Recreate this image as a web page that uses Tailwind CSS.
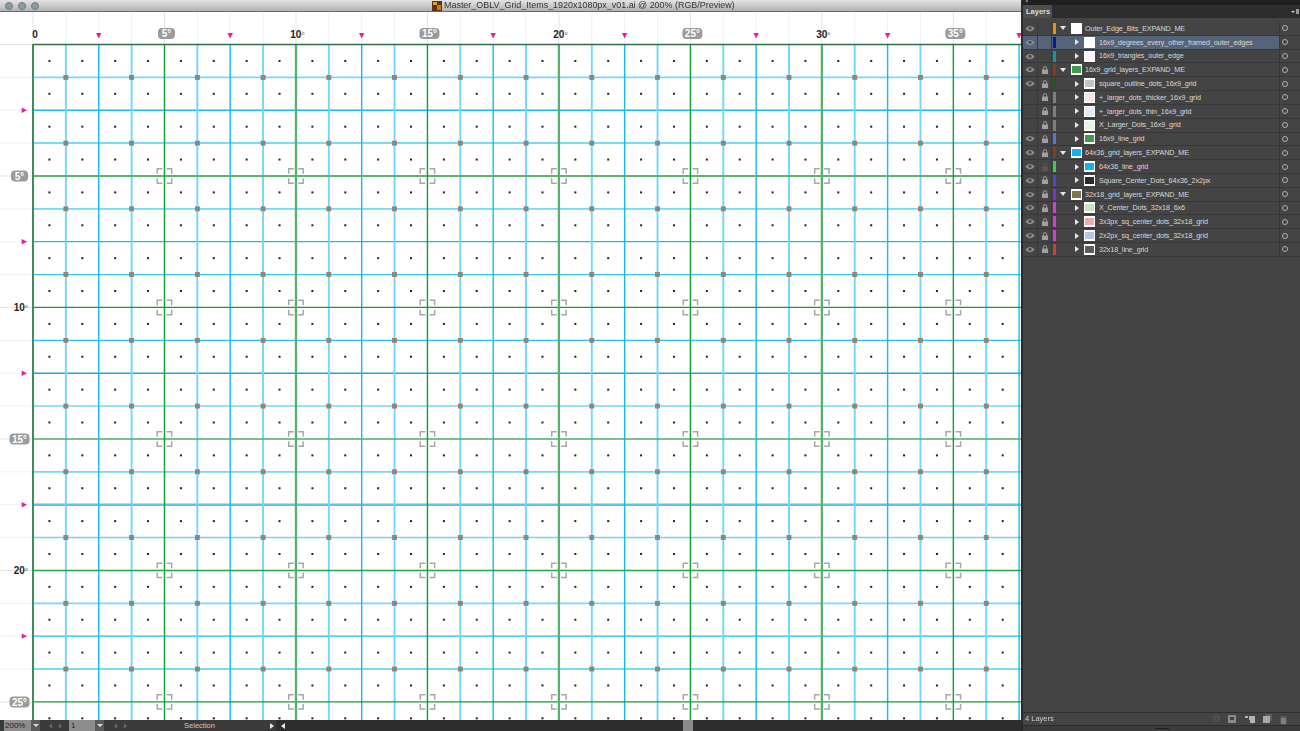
<!DOCTYPE html>
<html lang="en">
<head>
    <meta charset="UTF-8">
    <title>Master_OBLV_Grid_Items_1920x1080px_v01.ai</title>
    <script src="https://cdn.jsdelivr.net/npm/@tailwindcss/browser@4"></script>
</head>
<body class="w-[1300px] h-[731px] overflow-hidden bg-[#444444] font-['Liberation_Sans',sans-serif]">
    <div class="flex w-full h-full blur-[0.3px]">
        <!-- Document window -->
        <div class="w-[1021px] h-full flex flex-col">
            <!-- Title bar -->
            <div class="h-3 shrink-0 flex items-center relative bg-gradient-to-b from-[#e4e4e4] to-[#b2b2b2] border-b border-[#6a6a6a] overflow-hidden">
                <div class="flex gap-[5px] pl-[5px]">
                    <span class="w-2 h-2 rounded-full bg-[#8b9ba3] border border-[#6d7b82]"></span>
                    <span class="w-2 h-2 rounded-full bg-[#8b9ba3] border border-[#6d7b82]"></span>
                    <span class="w-2 h-2 rounded-full bg-[#8b9ba3] border border-[#6d7b82]"></span>
                </div>
                <div class="absolute left-[432px] top-0 h-[11px] flex items-center gap-[2px]">
                    <svg width="10" height="10" viewBox="0 0 10 10"><rect width="10" height="10" fill="#5a3410"/><rect x="1" y="1" width="4" height="3" fill="#e8a020"/><rect x="5" y="4" width="4" height="5" fill="#d07a18"/></svg>
                    <span class="text-[8.95px] leading-none text-[#333333] whitespace-nowrap">Master_OBLV_Grid_Items_1920x1080px_v01.ai @ 200% (RGB/Preview)</span>
                </div>
            </div>
            <!-- Artboard: the grid is a free canvas, drawn by the script below -->
            <div class="flex-1 bg-white overflow-hidden">
                <svg id="grid" width="1021" height="708" viewBox="0 12 1021 708" class="block"></svg>
            </div>
            <!-- Status bar -->
            <div class="h-[11px] shrink-0 flex items-center bg-[#3a3a3a] text-[8px] leading-none">
                <div class="w-[27px] h-full ml-[4px] bg-[#8d8d8d] text-[#1c1c1c] flex items-center pl-[1px]">200%</div>
                <div class="w-[9px] h-full bg-[#5a5a5a] flex items-center justify-center"><span class="border-x-[3px] border-x-transparent border-t-[3px] border-t-[#dddddd]"></span></div>
                <div class="w-[29px] flex items-center justify-center gap-[6px]">
                    <span class="border-y-[3px] border-y-transparent border-r-[3px] border-r-[#666666]"></span>
                    <span class="border-y-[3px] border-y-transparent border-r-[3px] border-r-[#666666]"></span>
                </div>
                <div class="w-[26px] h-full bg-[#8d8d8d] text-[#1c1c1c] flex items-center pl-[2px]">1</div>
                <div class="w-[9px] h-full bg-[#5a5a5a] flex items-center justify-center"><span class="border-x-[3px] border-x-transparent border-t-[3px] border-t-[#dddddd]"></span></div>
                <div class="w-[33px] flex items-center justify-center gap-[6px]">
                    <span class="border-y-[3px] border-y-transparent border-l-[3px] border-l-[#666666]"></span>
                    <span class="border-y-[3px] border-y-transparent border-l-[3px] border-l-[#666666]"></span>
                </div>
                <div class="w-[125px] text-center text-[#c9c9c9] text-[7.5px]">Selection</div>
                <div class="w-[14px] flex justify-end pr-[2px]"><span class="border-y-[3px] border-y-transparent border-l-[4px] border-l-[#e6e6e6]"></span></div>
                <div class="flex-1 h-full bg-[#2d2d2d] flex items-center relative">
                    <span class="ml-[5px] border-y-[3px] border-y-transparent border-r-[4px] border-r-[#e6e6e6]"></span>
                    <span class="absolute left-[407px] top-0 w-[10px] h-full bg-[#8c8c8c]"></span>
                </div>
            </div>
        </div>

        <!-- Layers panel -->
        <aside class="w-[279px] h-full flex flex-col border-l-2 border-[#2a2a2a] bg-[#444444] text-[#d6d6d6]">
            <div class="h-[5px] shrink-0 bg-[#1f1f1f] relative">
                <span class="absolute left-[2px] -top-[2px] text-[6px] leading-none text-[#bbbbbb]">×</span>
            </div>
            <div class="h-[13px] shrink-0 flex justify-between items-center bg-[#2d2d2d]">
                <div class="w-[29px] h-full bg-[#4e4e4e] text-[7.5px] font-bold leading-[13px] pl-[3px] text-[#dcdcdc]">Layers</div>
                <div class="mr-[1px] flex items-center gap-[1px]">
                    <span class="border-x-[2px] border-x-transparent border-t-[2px] border-t-[#cccccc]"></span>
                    <span class="w-[3px] h-[5px] bg-[#999999]"></span>
                </div>
            </div>
            <div class="h-[4px] shrink-0 bg-[#444444]"></div>
            <div id="layers" class="flex-1 flex flex-col"></div>
            <!-- Panel footer -->
            <div class="h-[13px] shrink-0 flex items-center border-t border-[#2f2f2f] relative">
                <span class="pl-[2px] text-[7.5px] leading-none text-[#cfcfcf]">4 Layers</span>
                <svg class="absolute left-[190px] top-[1px]" width="76" height="11" viewBox="0 0 76 11">
                    <circle cx="3.5" cy="4" r="2.5" fill="none" stroke="#5c5c5c"/><path d="M2 7L0 10" stroke="#5c5c5c"/>
                    <rect x="15" y="1" width="8" height="8" fill="#8a8a8a"/><rect x="17" y="3" width="4" height="3" fill="#444"/>
                    <path d="M32 2h3v2h-3z M36 2h6v7h-5v-3h-1z" fill="#b4b4b4"/>
                    <rect x="50" y="2" width="7" height="7" fill="#a8a8a8"/><path d="M52 1h6v6" fill="none" stroke="#777"/>
                    <path d="M67 3h7M68 4h5v6h-5z" fill="#7e7e7e" stroke="#7e7e7e" stroke-width="0.6"/>
                </svg>
            </div>
            <div class="h-[6px] shrink-0 bg-[#3a3a3a] border-t border-[#2c2c2c] flex justify-center">
                <span class="mt-[2px] w-[14px] h-px bg-[#1e1e1e]"></span>
            </div>
        </aside>
    </div>

    <script>
        // Grid geometry, in page pixels
        const ox = 33, oy = 44.5, cell = 32.87;
        const X = i => ox + i * cell;
        const Y = j => oy + j * cell;
        const RIGHT = 1021, BOTTOM = 720, COLS = 30, ROWS = 21;
        const line = (x1, y1, x2, y2, c, w) => `<line x1="${x1}" y1="${y1}" x2="${x2}" y2="${y2}" stroke="${c}" stroke-width="${w}"/>`;
        let out = '';

        // Faint ruler guides
        for (let i = 0; i <= COLS; i++) out += line(X(i), 12, X(i), oy, i % 4 == 0 ? '#e4e4e4' : '#f1f1f1', 1);
        for (let j = 0; j <= ROWS; j++) out += line(0, Y(j), ox, Y(j), j % 4 == 0 ? '#e4e4e4' : '#f1f1f1', 1);

        // Horizontal lines, each resampled a little differently in the screenshot
        const hStyle = { 1: ['#74d9fa', 1.7], 2: ['#18bcf0', 1.4], 3: ['#78dbfa', 2], 5: ['#74d9fa', 1.7], 6: ['#18bcf0', 1.3], 7: ['#30c6f4', 1.4],
            9: ['#28c2f2', 1.3], 10: ['#1aa8dc', 1.4], 11: ['#74d9fa', 1.5], 13: ['#74d9fa', 1.7], 14: ['#5cc4e6', 2.5], 15: ['#6fd6f8', 1.6] };
        for (let j = 1; j <= ROWS; j++) {
            let s = hStyle[j % 16] || (j % 2 ? ['#74d9fa', 1.7] : ['#18bcf0', 1.4]);
            if (j % 4 == 0) continue;
            out += line(ox, Y(j), RIGHT, Y(j), s[0], s[1]);
        }
        // Vertical cyan lines
        for (let i = 1; i <= COLS; i++) {
            if (i % 4 == 0) continue;
            out += i % 2 ? line(X(i), oy, X(i), BOTTOM, '#6fd8fb', 1.9) : line(X(i), oy, X(i), BOTTOM, '#12bbf0', 1.4);
        }
        // Green 5 degree lines
        const hGreen = { 4: ['#5cb46e', 2], 8: ['#109e34', 1.3], 12: ['#4fae68', 1.6], 16: ['#26a34a', 1.5], 20: ['#0fa02d', 1.3] };
        for (const j in hGreen) out += line(ox, Y(+j), RIGHT, Y(+j), hGreen[j][0], hGreen[j][1]);
        for (let i = 4; i < COLS; i += 4) {
            out += i % 8 ? line(X(i), oy, X(i), BOTTOM, '#0fa02d', 1.4) : line(X(i), oy, X(i), BOTTOM, '#55b26a', 2.3);
        }
        out += line(ox, oy, RIGHT, oy, '#2f6f45', 1.3);
        out += line(ox, oy - 0.6, ox, BOTTOM, '#3f8a5e', 2);

        // Centre dots
        for (let i = 0; i < COLS; i++) for (let j = 0; j < ROWS; j++)
            out += `<rect x="${X(i + .5) - 1}" y="${Y(j + .5) - 1}" width="2" height="2" fill="#222"/>`;

        // Square outline dots
        for (let i = 1; i < COLS; i += 2) for (let j = 1; j < ROWS; j += 2)
            out += `<rect x="${X(i) - 2}" y="${Y(j) - 2}" width="4" height="4" fill="#7c8f90" stroke="#9a7a66" stroke-width="0.8"/>`;

        // Corner brackets on the 5 degree crossings
        for (let i = 4; i < COLS; i += 4) for (let j = 4; j < ROWS; j += 4) {
            const a = X(i), b = Y(j), r = 7.2, t = 5;
            out += `<path fill="none" stroke="#a8a8a8" stroke-width="1.5" d="M${a - r} ${b - r + t}V${b - r}H${a - r + t}M${a + r - t} ${b - r}H${a + r}V${b - r + t}M${a + r} ${b + r - t}V${b + r}H${a + r - t}M${a - r + t} ${b + r}H${a - r}V${b + r - t}"/>`;
        }

        // Magenta triangles
        for (let i = 2; i <= COLS; i += 4) out += `<path d="M${X(i) - 2.7} 33H${X(i) + 2.7}L${X(i)} 38.5Z" fill="#ec1c9c"/>`;
        for (let j = 2; j < ROWS; j += 4) out += `<path d="M21.7 ${Y(j) - 2.7}V${Y(j) + 2.7}L27 ${Y(j)}Z" fill="#ec1c9c"/>`;

        // Degree labels
        const pill = (cx, cy, t) => {
            const w = t < 10 ? 17 : 20;
            return `<rect x="${cx - w / 2}" y="${cy - 5.5}" width="${w}" height="11" rx="4" fill="#9b9b9b"/>
            <text x="${cx}" y="${cy + 3.6}" text-anchor="middle" class="text-[10px] font-bold fill-white">${t}°</text>`;
        };
        const plain = (x, y, t, anchor) => `<text x="${x}" y="${y}" text-anchor="${anchor}" class="text-[10px] font-bold fill-[#1c1c1c]">${t}<tspan class="font-bold fill-[#777777] text-[8px]">°</tspan></text>`;
        out += `<text x="35" y="38" text-anchor="middle" class="text-[10px] font-bold fill-[#1c1c1c]">0</text>`;
        for (let n = 1; n <= 7; n++) {
            const x = X(n * 4) + 0.5;
            out += n % 2 ? pill(x + 1.5, 33.5, 5 * n) : plain(x + 1, 38, 5 * n, 'middle');
        }
        for (let n = 1; n <= 5; n++) {
            const y = Y(n * 4);
            out += n % 2 ? pill(19.5, y, 5 * n) : plain(28, y + 3.5, 5 * n, 'end');
        }
        document.getElementById('grid').innerHTML = out;

        // Layers panel
        const eye = `<svg width="10" height="7" viewBox="0 0 10 7"><path d="M0.5 3.5C3 0 7 0 9.5 3.5C7 7 3 7 0.5 3.5Z" fill="#8f8f8f"/><circle cx="5" cy="3.3" r="1.6" fill="#4a4a4a"/></svg>`;
        const lockOn = `<svg width="6" height="8" viewBox="0 0 6 8"><path d="M1.3 4V2.3a1.7 1.7 0 0 1 3.4 0V4" fill="none" stroke="#a0a0a0"/><rect y="3.6" width="6" height="4.4" fill="#a0a0a0"/></svg>`;
        const lockDim = `<svg width="6" height="8" viewBox="0 0 6 8"><path d="M1.3 4V2.3a1.7 1.7 0 0 1 3.4 0V4" fill="none" stroke="#575757"/><rect y="3.6" width="6" height="4.4" fill="#575757"/></svg>`;
        const rows = [
            { name: 'Outer_Edge_Bits_EXPAND_ME', top: true, eye: true, lock: 0, bar: 'bg-[#e8920f]', sw: 'bg-white', },
            { name: '16x9_degrees_every_other_framed_outer_edges', eye: true, lock: 0, bar: 'bg-[#0a1aa0]', sw: 'bg-white', sel: true },
            { name: '16x9_triangles_outer_edge', eye: true, lock: 0, bar: 'bg-[#1296a6]', sw: 'bg-[#fbf4f8]' },
            { name: '16x9_grid_layers_EXPAND_ME', top: true, eye: true, lock: 1, bar: 'bg-[#8a3a16]', sw: 'bg-[#3f9a4f]', band: true },
            { name: 'square_outline_dots_16x9_grid', eye: true, lock: 1, bar: 'bg-[#166016]', sw: 'bg-[#c4c4c4]', band: true },
            { name: '+_larger_dots_thicker_16x9_grid', lock: 1, bar: 'bg-[#7f7f7f]', sw: 'bg-[#fbe3e3]' },
            { name: '+_larger_dots_thin_16x9_grid', lock: 1, bar: 'bg-[#7f7f7f]', sw: 'bg-[#e6e9fb]' },
            { name: 'X_Larger_Dots_16x9_grid', lock: 1, bar: 'bg-[#7f7f7f]', sw: 'bg-[#e6f4e6]' },
            { name: '16x9_line_grid', eye: true, lock: 1, bar: 'bg-[#4a78dc]', sw: 'bg-[#3f9a4f]', band: true },
            { name: '64x36_grid_layers_EXPAND_ME', top: true, eye: true, lock: 1, bar: 'bg-[#8a3a16]', sw: 'bg-[#12b4f0]', band: true },
            { name: '64x36_line_grid', eye: true, lock: 2, bar: 'bg-[#3ad04a]', sw: 'bg-[#12b4f0]', band: true },
            { name: 'Square_Center_Dots_64x36_2x2px', eye: true, lock: 1, bar: 'bg-[#4848dc]', sw: 'bg-[#2a2a2a]', band: true },
            { name: '32x18_grid_layers_EXPAND_ME', top: true, eye: true, lock: 1, bar: 'bg-[#8030d0]', sw: 'bg-[#7f7350]', band: true },
            { name: 'X_Center_Dots_32x18_6x6', eye: true, lock: 1, bar: 'bg-[#d040d0]', sw: 'bg-[#c6e4c0]', band: true },
            { name: '3x3px_sq_center_dots_32x18_grid', eye: true, lock: 1, bar: 'bg-[#d040d0]', sw: 'bg-[#f2a8b0]', band: true },
            { name: '2x2px_sq_center_dots_32x18_grid', eye: true, lock: 1, bar: 'bg-[#d040d0]', sw: 'bg-[#b8c4e6]', band: true },
            { name: '32x18_line_grid', eye: true, lock: 1, bar: 'bg-[#d04030]', sw: 'bg-[#5c5c5c]', band: true },
        ];
        document.getElementById('layers').innerHTML = rows.map(r => `
            <div class="h-[13.82px] shrink-0 flex items-stretch border-b border-[#383838]">
                <div class="flex-1 flex items-center ${r.sel ? 'bg-[#56647a]' : ''}">
                    <div class="w-[15px] h-full shrink-0 flex items-center justify-center border-r border-[#3a3a3a]">${r.eye ? eye : ''}</div>
                    <div class="w-[14px] h-full shrink-0 flex items-center justify-center border-r border-[#3a3a3a]">${r.lock == 1 ? lockOn : r.lock == 2 ? lockDim : ''}</div>
                    <div class="w-[3px] h-[11px] ml-[1px] shrink-0 ${r.bar}"></div>
                    <div class="${r.top ? 'w-[15px]' : 'w-[28px]'} shrink-0 flex justify-end pr-[5px]">
                        ${r.top ? '<span class="border-x-[3px] border-x-transparent border-t-[4px] border-t-[#e6e6e6]"></span>' : '<span class="border-y-[3px] border-y-transparent border-l-[4px] border-l-[#e6e6e6]"></span>'}
                    </div>
                    <div class="w-[11px] h-[11px] shrink-0 border border-white ${r.sw} ${r.band ? 'border-y-2' : ''}"></div>
                    <span class="${r.top ? 'ml-[3px]' : 'ml-[4px]'} text-[7.2px] leading-none whitespace-nowrap tracking-[-0.1px] text-[#d8d8d8]">${r.name}</span>
                </div>
                <div class="w-[21px] shrink-0 flex items-center pl-[2px] border-l border-[#383838]">
                    <span class="w-[6px] h-[6px] rounded-full border border-[#b0b0b0]"></span>
                </div>
            </div>`).join('');
    </script>
</body>
</html>
